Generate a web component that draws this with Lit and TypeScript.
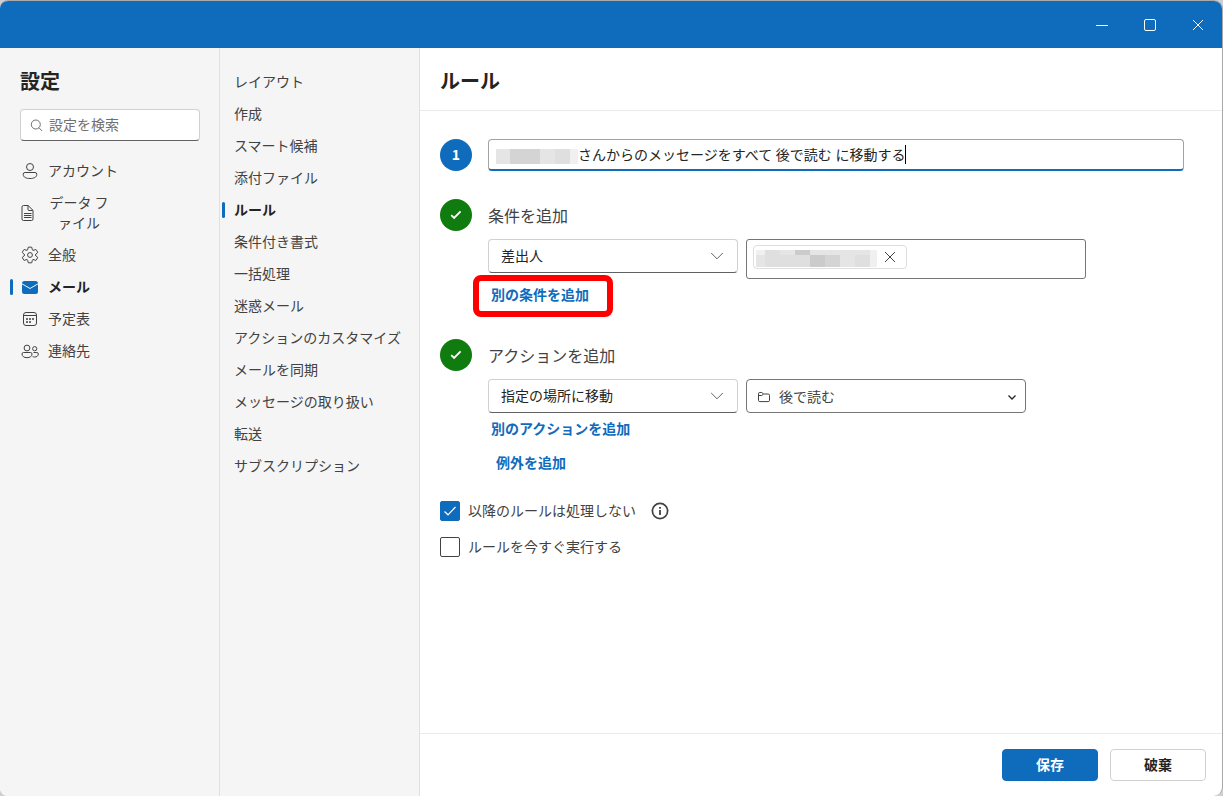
import { LitElement, html, css, svg } from "lit";
import { customElement } from "lit/decorators.js";
import { classMap } from "lit/directives/class-map.js";

const icons: Record<string, unknown> = {
  person: svg`<circle cx="10" cy="6" r="3.5"/><path d="M5 11.500h10a1.800 1.800 0 0 1 1.800 1.800c0 3-3 4.200-6.800 4.200s-6.800-1.200-6.800-4.200A1.800 1.800 0 0 1 5 11.500z"/>`,
  file: svg`<path d="M3.500 2.500h4.600l4.900 4.900v8.600a1.500 1.500 0 0 1-1.500 1.500h-8A1.500 1.500 0 0 1 2 16V4a1.500 1.500 0 0 1 1.500-1.500z"/><path d="M8 2.700V6.500a1 1 0 0 0 1 1h3.800M4 10.500h7.500M4 12.500h7.500M4 14.500h7.500"/>`,
  gear: svg`<path d="M8.200 2.300a8 8 0 0 1 3.600 0l.4 1.900a1.300 1.300 0 0 0 1.800 1l1.800-.8a8 8 0 0 1 1.900 3.200l-1.600 1.300a1.350 1.350 0 0 0 0 2.200l1.600 1.200a8 8 0 0 1-1.900 3.200l-1.800-.8a1.300 1.300 0 0 0-1.800 1l-.4 2a8 8 0 0 1-3.600 0l-.4-2a1.300 1.300 0 0 0-1.800-1l-1.800.8a8 8 0 0 1-1.900-3.200l1.600-1.200a1.350 1.350 0 0 0 0-2.200L2.300 7.600a8 8 0 0 1 1.900-3.200l1.800.8a1.300 1.300 0 0 0 1.800-1z"/><circle cx="10" cy="10" r="2.400"/>`,
  mail: svg`<path class="solid" d="M2 6.500A2.500 2.500 0 0 1 4.500 4h11A2.500 2.500 0 0 1 18 6.500v8a2.500 2.500 0 0 1-2.500 2.500h-11A2.500 2.500 0 0 1 2 14.500z"/><path class="flap" d="M1.800 6.700 10 11.500l8.200-4.800"/>`,
  calendar: svg`<rect x="3.500" y="3.500" width="13" height="13" rx="2.500"/><path d="M3.500 6.500h13"/><g class="dots"><circle cx="7" cy="10" r="1"/><circle cx="10" cy="10" r="1"/><circle cx="13" cy="10" r="1"/><circle cx="7" cy="13" r="1"/><circle cx="10" cy="13" r="1"/></g>`,
  people: svg`<circle cx="7" cy="7" r="2.900"/><circle cx="14.700" cy="7.700" r="2.100"/><path d="M3.500 11.500h7a1.500 1.500 0 0 1 1.500 1.500c0 2.300-2 3.700-5 3.700S2 15.300 2 13a1.500 1.500 0 0 1 1.500-1.500zM13.500 11.500h3.300a1.500 1.500 0 0 1 1.500 1.500c0 2-1.600 3-3.600 3-.8 0-1.500-.1-2.100-.4"/>`,
};

const sections = [
  { icon: "person", label: "アカウント" },
  { icon: "file", label: "データ ファイル", wrap: true },
  { icon: "gear", label: "全般" },
  { icon: "mail", label: "メール", active: true },
  { icon: "calendar", label: "予定表" },
  { icon: "people", label: "連絡先" },
];

const pages = [
  "レイアウト", "作成", "スマート候補", "添付ファイル", "ルール", "条件付き書式", "一括処理",
  "迷惑メール", "アクションのカスタマイズ", "メールを同期", "メッセージの取り扱い", "転送", "サブスクリプション",
];

@customElement("app-root")
export class AppRoot extends LitElement {
  static styles = css`
    :host { display: block; height: 796px; background: #cfcfcf; color: #424242;
      font: 14px/20px "Noto Sans CJK JP", sans-serif; }
    * { box-sizing: border-box; }
    svg { display: block; flex: none; fill: none; stroke: currentColor; stroke-width: 1; }
    .window { height: 796px; display: flex; flex-direction: column; overflow: hidden; background: #fff;
      border: solid #a9a9a9; border-width: 1px 1px 0 0; border-radius: 8px 9px 9px 8px; }
    .titlebar { height: 47px; flex: none; background: #0f6cbd; color: #fff; display: flex; justify-content: flex-end; }
    .titlebar span { width: 48px; display: grid; place-items: center; }
    .body { flex: 1; min-height: 0; display: flex; }
    .side { width: 220px; flex: none; background: #f5f5f5; border-right: 1px solid #e0e0e0; }
    h1 { margin: 0; font-size: 20px; line-height: 28px; font-weight: 700; color: #242424; }
    .side h1 { padding: 19px 0 0 20px; }
    .label { padding-bottom: 2px; }
    .search { margin: 14px 19px 14px 20px; height: 32px; border: 1px solid #d1d1d1; border-bottom-color: #616161;
      border-radius: 4px; background: #fff; display: flex; align-items: center; gap: 6px; padding-left: 9px; color: #707070; }
    .item { height: 32px; display: flex; align-items: center; padding-left: 20px; gap: 8px; position: relative; }
    .item.wrap { height: 52px; }
    .item.wrap .label { width: 62px; text-align: center; word-break: break-all; line-break: anywhere; }
    .pages { width: 200px; padding-top: 18px; }
    .pages .item { padding-left: 14px; }
    .active { color: #242424; font-weight: 700; }
    .active svg { color: #0f6cbd; }
    .item.active::before { content: ""; position: absolute; left: 10px; top: 8px; width: 3px; height: 16px;
      border-radius: 2px; background: #0f6cbd; }
    .pages .item.active::before { left: 2px; }
    .solid { fill: currentColor; stroke: none; }
    .flap { stroke: #f5f5f5; }
    .dots { fill: currentColor; stroke: none; }
    main { flex: 1; min-width: 0; display: flex; flex-direction: column; }
    header { height: 63px; flex: none; padding: 19px 20px 0; border-bottom: 1px solid #ebebeb; }
    .form { flex: 1; padding: 28px 38px 0 20px; }
    .step { display: grid; grid-template-columns: 32px 1fr; column-gap: 16px; }
    .badge { width: 32px; height: 32px; border-radius: 50%; background: #0f6cbd; color: #fff; display: grid;
      place-items: center; font-weight: 700; }
    .badge.done { background: #107c10; }
    .name { height: 32px; border: 1px solid #a3a3a3; border-bottom: 2px solid #0f6cbd; border-radius: 4px;
      display: flex; align-items: center; padding-left: 7px; color: #242424; word-spacing: .5px; }
    .caret { width: 1px; height: 19px; background: #000; }
    .mosaic { display: grid; }
    .mosaic.who { grid-template-columns: 14px 15px 15px 15px 15px 8px; grid-template-rows: 15px; padding-top: 4px; }
    .mosaic.addr { grid-template-columns: 9px repeat(7, 15px) 7px; grid-template-rows: 5px 12px; }
    .a { background: #ececec; } .b { background: #dfdfdf; } .c { background: #d4d4d5; }
    .d { background: #cbcbcb; } .e { background: #e5e5e6; } .f { background: #f0f0f1; }
    .step + .step { margin-top: 28px; }
    .conditions { height: 112px; }
    .heading { font-size: 16px; line-height: 22px; padding-top: 5px; height: 40px; }
    .row { display: flex; gap: 8px; align-items: flex-start; }
    .combo { width: 250px; height: 34px; border: 1px solid #d1d1d1; border-bottom-color: #616161; border-radius: 4px;
      display: flex; align-items: center; justify-content: space-between; padding: 0 12px; color: #242424; }
    .combo svg { color: #616161; }
    .recipients { width: 340px; height: 40px; border: 1px solid #757575; border-radius: 3px; padding: 5px 6px; }
    .chip { width: 154px; height: 24px; border: 1px solid #dedede; border-radius: 4px; display: flex;
      align-items: center; padding: 2px 0 0 2px; color: #424242; }
    .chip svg { margin: -2px 0 0 5px; }
    .folder { width: 280px; height: 34px; border: 1px solid #757575; border-radius: 4px; display: flex;
      align-items: center; padding: 0 8px 0 10px; gap: 8px; }
    .folder .place { flex: 1; }
    .folder svg { margin-top: 1px; }
    .folder svg:last-child { color: #242424; }
    .link { color: #0f6cbd; font-weight: 700; }
    .spot { margin: 2px 0 0 -15px; width: 140px; height: 42px; border: 6px solid #f00; border-radius: 8px;
      padding: 3px 0 0 12px; position: relative; top: -6px; }
    .more { padding: 5px 3px 7px; }
    .except { padding: 7px 0 1px 8px; }
    .check { display: flex; align-items: center; height: 20px; gap: 8px; }
    .check .info { margin-left: 7px; color: #424242; }
    .box { width: 20px; height: 20px; border: 1px solid #424242; border-radius: 2px; display: grid; place-items: center; }
    .box.on { background: #0f6cbd; border-color: #0f6cbd; color: #fff; }
    .checks { display: grid; gap: 16px; margin-top: 28px; }
    footer { height: 63px; flex: none; border-top: 1px solid #ebebeb; display: flex; justify-content: flex-end;
      gap: 12px; padding: 15px 16px 0; }
    .btn { width: 96px; height: 32px; border: 1px solid #d1d1d1; border-radius: 4px; font-weight: 700; color: #242424;
      display: grid; place-items: center; padding-bottom: 2px; }
    .btn.primary { background: #0f6cbd; border-color: #0f6cbd; color: #fff; }
  `;

  private mosaic(kind: string, cells: string) {
    return html`<span class="mosaic ${kind}">${[...cells].map((c) => html`<i class=${c}></i>`)}</span>`;
  }

  private combo(label: string) {
    return html`<div class="combo"><span class="label">${label}</span>
      <svg width="16" height="16" viewBox="0 0 16 16"><path d="M2.200 5 8 10.800 13.800 5"/></svg></div>`;
  }

  private done() {
    return html`<div class="badge done"><svg width="12" height="12" viewBox="0 0 12 12"><path stroke-width="1.800" d="m1.200 6.200 2.900 2.800L10.600 2.400"/></svg></div>`;
  }

  render() {
    return html`<div class="window">
      <div class="titlebar">
        <span><svg width="12" height="12" viewBox="0 0 12 12"><path d="M0 6.500h12"/></svg></span>
        <span><svg width="12" height="12" viewBox="0 0 12 12"><rect x=".5" y=".5" width="11" height="11" rx="1.500"/></svg></span>
        <span><svg width="12" height="12" viewBox="0 0 12 12"><path d="m1 1 10 10M11 1 1 11"/></svg></span>
      </div>
      <div class="body">
        <nav class="side">
          <h1>設定</h1>
          <div class="search">
            <svg width="13" height="13" viewBox="0 0 13 13"><circle cx="5.800" cy="5.500" r="4.500"/><path d="m9 8.800 3.200 3.200"/></svg>
            <span class="label">設定を検索</span>
          </div>
          ${sections.map((s) => html`<div class=${classMap({ item: true, wrap: !!s.wrap, active: !!s.active })}>
            <svg width="20" height="20" viewBox="0 0 20 20">${icons[s.icon]}</svg>
            <span class="label">${s.label}</span></div>`)}
        </nav>
        <nav class="side pages">
          ${pages.map((p) => html`<div class=${classMap({ item: true, active: p === "ルール" })}><span class="label">${p}</span></div>`)}
        </nav>
        <main>
          <header><h1>ルール</h1></header>
          <div class="form">
            <div class="step">
              <div class="badge"><span class="label">1</span></div>
              <div class="name">${this.mosaic("who", "eccebf")}<span class="label">さんからのメッセージをすべて 後で読む に移動する</span><i class="caret"></i></div>
            </div>
            <div class="step conditions">
              ${this.done()}
              <div>
                <div class="heading">条件を追加</div>
                <div class="row">
                  ${this.combo("差出人")}
                  <div class="recipients"><div class="chip">
                    ${this.mosaic("addr", "fbedeeeefebbbdcebf")}
                    <svg width="16" height="16" viewBox="0 0 16 16"><path d="m3 3 10 10M13 3 3 13"/></svg>
                  </div></div>
                </div>
                <div class="link spot">別の条件を追加</div>
              </div>
            </div>
            <div class="step">
              ${this.done()}
              <div>
                <div class="heading">アクションを追加</div>
                <div class="row">
                  ${this.combo("指定の場所に移動")}
                  <div class="folder">
                    <svg width="14" height="14" viewBox="0 0 14 14"><path d="M1.500 3.800A1.300 1.300 0 0 1 2.800 2.500h2l1.700 1.500h4.700a1.300 1.300 0 0 1 1.300 1.300v5a1.300 1.300 0 0 1-1.300 1.300H2.800a1.300 1.300 0 0 1-1.300-1.300zM1.500 5.500h3.300L6.500 4"/></svg>
                    <span class="place">後で読む</span>
                    <svg width="10" height="10" viewBox="0 0 10 10"><path stroke-width="1.300" d="M1.500 3.500 5 7l3.500-3.500"/></svg>
                  </div>
                </div>
                <div class="link more">別のアクションを追加</div>
                <div class="link except">例外を追加</div>
              </div>
            </div>
            <div class="checks">
              <div class="check"><span class="box on"><svg width="14" height="14" viewBox="0 0 14 14"><path stroke-width="1.200" d="m1.500 7.500 3.500 3.300L12.500 3"/></svg></span>
                <span class="label">以降のルールは処理しない</span>
                <svg class="info" width="18" height="18" viewBox="0 0 18 18"><circle cx="9" cy="9" r="7.600" stroke-width="1.700"/><path stroke-width="1.800" d="M9 8v5M9 5v1.700"/></svg></div>
              <div class="check"><span class="box"></span><span class="label">ルールを今すぐ実行する</span></div>
            </div>
          </div>
          <footer><div class="btn primary">保存</div><div class="btn">破棄</div></footer>
        </main>
      </div>
    </div>`;
  }
}
